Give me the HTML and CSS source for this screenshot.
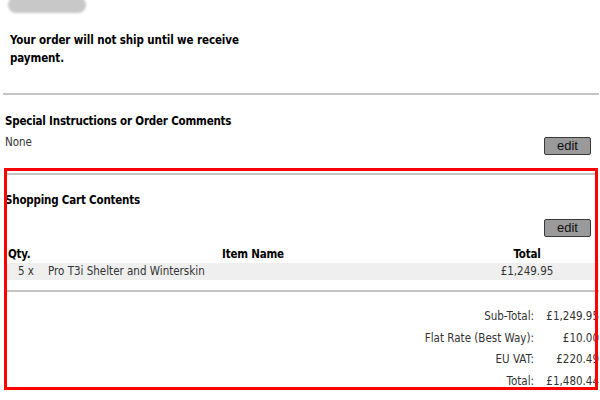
FILE: index.html
```html
<!DOCTYPE html>
<html>
<head>
<meta charset="utf-8">
<link rel="stylesheet" href="styles.css">
</head>
<body>
<div class="page">
  <div class="blur-pill"></div>
  <p class="notice">Your order will not ship until we receive payment.</p>
  <hr class="rule rule-top">
  <h3 class="heading heading-special">Special Instructions or Order Comments</h3>
  <div class="comment-row">
    <span class="plain">None</span>
    <button class="edit-btn edit-comments">edit</button>
  </div>
  <hr class="rule rule-cart">
  <h3 class="heading heading-cart">Shopping Cart Contents</h3>
  <div class="edit-row"><button class="edit-btn">edit</button></div>
  <table class="cart">
    <thead>
      <tr><th class="col-qty">Qty.</th><th class="col-name">Item Name</th><th class="col-total">Total</th></tr>
    </thead>
    <tbody>
      <tr class="item"><td class="col-qty">5 x</td><td class="col-name">Pro T3i Shelter and Winterskin</td><td class="col-total">£1,249.95</td></tr>
    </tbody>
  </table>
  <hr class="rule rule-totals">
  <div class="totals">
    <div class="t-label">Sub-Total:</div><div class="t-value">£1,249.95</div>
    <div class="t-label">Flat Rate (Best Way):</div><div class="t-value">£10.00</div>
    <div class="t-label">EU VAT:</div><div class="t-value">£220.49</div>
    <div class="t-label">Total:</div><div class="t-value">£1,480.44</div>
  </div>
</div>
<div class="highlight"></div>
</body>
</html>
```
FILE: styles.css
```css
html, body {
  margin: 0;
  padding: 0;
  background: #fff;
}
body {
  width: 600px;
  height: 400px;
  overflow: hidden;
  position: relative;
  font-family: "DejaVu Sans", Verdana, sans-serif;
  color: #000;
}
.page {
  padding: 0 1px 0 5px;
}
.blur-pill {
  width: 78px;
  height: 16px;
  margin: -3px 0 0 3px;
  background: #c8c8c8;
  border-radius: 8px;
  filter: blur(1.2px);
}
.notice {
  width: 250px;
  margin: 18px 0 0 5px;
  font-family: "DejaVu Sans Condensed", "DejaVu Sans", sans-serif;
  font-stretch: condensed;
  font-size: 11.5px;
  font-weight: bold;
  line-height: 18px;
  letter-spacing: -0.1px;
}
.rule {
  border: 0;
  height: 2px;
  background: #c4c4c4;
  margin: 0;
}
.rule-top {
  margin-top: 26px;
  margin-left: -2px;
}
.heading {
  font-family: "DejaVu Sans Condensed", "DejaVu Sans", sans-serif;
  font-stretch: condensed;
  font-size: 11.5px;
  font-weight: bold;
  margin: 0;
  line-height: 16px;
  letter-spacing: -0.2px;
}
.heading-special {
  margin-top: 18px;
}
.plain {
  font-family: "DejaVu Sans Condensed", "DejaVu Sans", sans-serif;
  font-stretch: condensed;
  font-size: 11.5px;
  color: #333;
}
.comment-row {
  display: flex;
  justify-content: space-between;
  align-items: flex-start;
  margin-top: 6px;
  padding-right: 8px;
}
.edit-btn {
  width: 47px;
  height: 18px;
  padding: 0;
  background: #9a9a9a;
  border: 1px solid #3a3a3a;
  border-radius: 2px;
  font-family: "Liberation Sans", Arial, sans-serif;
  font-size: 13px;
  line-height: 16px;
  color: #111;
}
.edit-comments {
  margin-top: 2px;
}
.rule-cart {
  margin-top: 18px;
  margin-left: 2px;
  margin-right: 3px;
}
.heading-cart {
  margin-top: 17px;
}
.edit-row {
  display: flex;
  justify-content: flex-end;
  padding-right: 8px;
  margin-top: 11px;
}
.cart {
  width: 100%;
  border-collapse: collapse;
  margin-top: 9px;
}
.cart th {
  font-family: "DejaVu Sans Condensed", "DejaVu Sans", sans-serif;
  font-stretch: condensed;
  font-size: 11.5px;
  font-weight: bold;
  padding: 0;
  line-height: 17px;
  letter-spacing: -0.2px;
}
.cart td {
  font-family: "DejaVu Sans Condensed", "DejaVu Sans", sans-serif;
  font-stretch: condensed;
  font-size: 11.5px;
  color: #333;
  padding: 0;
  line-height: 17px;
}
.cart .col-qty {
  width: 30px;
  text-align: left;
}
.cart td.col-qty {
  padding-left: 11px;
}
.cart th.col-qty {
  padding-left: 2px;
}
.cart th.col-name {
  text-align: center;
  padding-right: 18px;
}
.cart td.col-name {
  text-align: left;
}
.cart .col-total {
  width: 100px;
  text-align: center;
  padding-right: 22px;
}
.cart .item td {
  background: #efefef;
}
.cart .item td.col-qty {
  border-left: 2px solid #fff;
}
.rule-totals {
  margin-top: 10px;
}
.totals {
  display: grid;
  grid-template-columns: 1fr 62px;
  column-gap: 3px;
  row-gap: 6.7px;
  margin-top: 17px;
  font-family: "DejaVu Sans Condensed", "DejaVu Sans", sans-serif;
  font-stretch: condensed;
  font-size: 11.5px;
  line-height: 15px;
  color: #333;
}
.t-label, .t-value {
  text-align: right;
}
.highlight {
  position: absolute;
  left: 4px;
  top: 168px;
  width: 588px;
  height: 216px;
  border: 3px solid #ff0000;
  pointer-events: none;
}
```
